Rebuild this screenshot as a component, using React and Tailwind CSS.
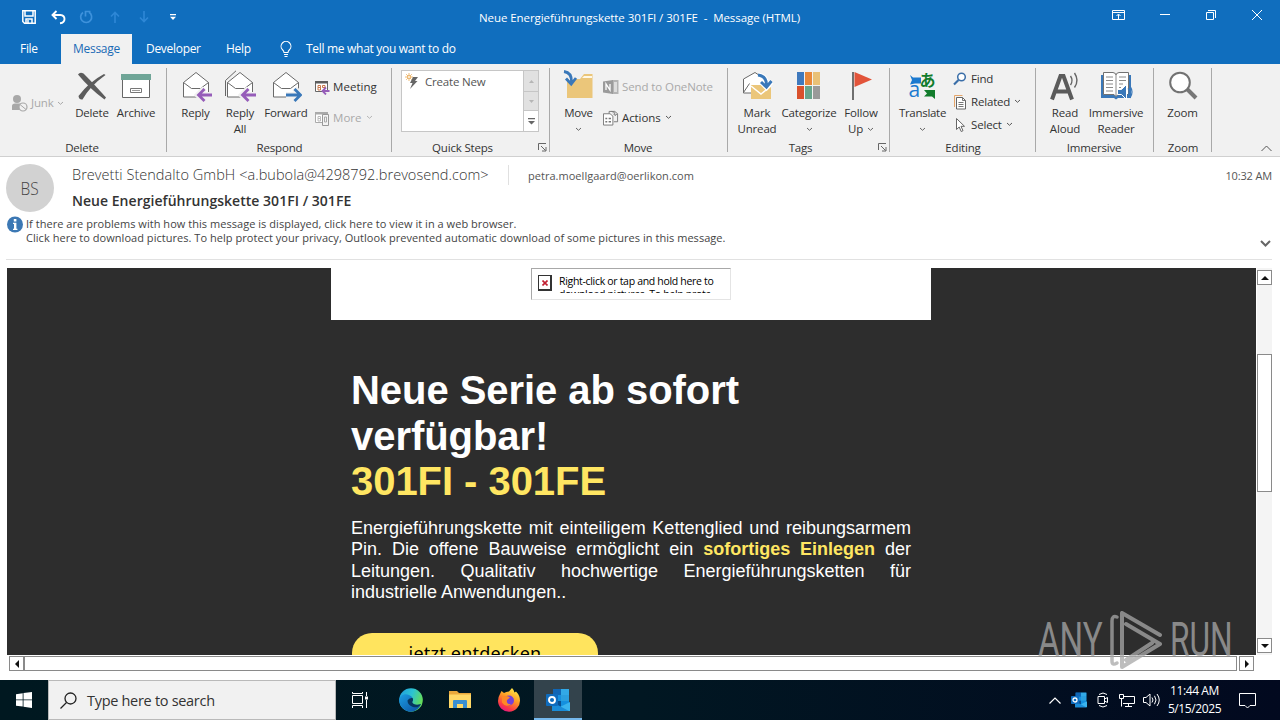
import React from 'react';

const Chevron = ({ className = '' }) => (
  <svg width="7" height="5" viewBox="0 0 7 5" className={className} fill="none" stroke="currentColor" strokeWidth="1">
    <path d="M1 1l2.500 2.300L6 1" />
  </svg>
);

/* ---------- ribbon icons ---------- */

const DeleteIcon = () => (
  <svg width="32" height="32" viewBox="0 0 32 32" fill="#5c5c5c">
    <path d="M2 4.500Q4 1.500 7.500 3.500Q18 14 30 27.500L28.500 29.500Q14 19 2 4.500Z" />
    <path d="M29.500 5L28 4Q13 12 2.500 26Q3 30 6.500 29.500Q14 16 29.500 5Z" />
  </svg>
);
const ArchiveIcon = () => (
  <svg width="32" height="32" viewBox="0 0 32 32">
    <path d="M2.500 8v19.500h27V8" fill="#fff" stroke="#666" />
    <path d="M1 4h30v6H1z" fill="#6fa597" />
    <path d="M10.500 18.500h11v4h-11z" fill="#fff" stroke="#777" />
    <path d="M12 20.500h8" stroke="#999" />
  </svg>
);
const Envelope = ({ arrow, all }) => (
  <svg width="32" height="32" viewBox="0 0 32 32" fill="none">
    {all && <path d="M1.500 26V10.500L12 .8" stroke="#666" />}
    <path d="M3.500 12.500L16 2.500l12.500 10v14.500h-25z" fill="#fff" stroke="#6a6a6a" />
    <path d="M3.500 12.500l8 6h9l8-6" stroke="#6a6a6a" />
    {arrow === 'left' ? (
      <path d="M32 25H19M24.500 18.500L18 25l6.500 6.500" stroke="#f1f1f1" strokeWidth="6" />
    ) : (
      <path d="M16 25h13M24.500 18.500L31 25l-6.500 6.500" stroke="#f1f1f1" strokeWidth="6" />
    )}
    {arrow === 'left' ? (
      <path d="M32 25H19M24.500 19L18.500 25l6 6" stroke="#965db9" strokeWidth="2.800" />
    ) : (
      <path d="M16 25h13M24.500 19l6 6-6 6" stroke="#3a78b9" strokeWidth="2.800" />
    )}
  </svg>
);
const MoveIcon = () => (
  <svg width="32" height="32" viewBox="0 0 32 32">
    <path d="M4 9h13l4-5h8.500v24H4z" fill="#ebc67a" />
    <path d="M21 6h8v2H19z" fill="#fff8e6" />
    <path d="M1 2q8 1 7.500 11" fill="none" stroke="#f1f1f1" strokeWidth="5" />
    <path d="M1 1.500q8 1 7.500 11M3 8.500l5.200 5.500L13 8" fill="none" stroke="#3a78b9" strokeWidth="2.800" />
  </svg>
);
const UnreadIcon = () => (
  <svg width="32" height="32" viewBox="0 0 32 32" fill="none">
    <path d="M2.500 9L14 2.500l9 6V23H2.500z" fill="#fff" stroke="#6a6a6a" />
    <path d="M2.500 22.500l6-9" stroke="#6a6a6a" />
    <path d="M10 15h20v14H10z" fill="#ebc67a" />
    <path d="M10 16l10 8 10-8" stroke="#fff" strokeWidth="1.500" />
    <path d="M17 5q9 1 8.500 11M20 12l5.500 5.500L31 11" stroke="#fff" strokeWidth="5" />
    <path d="M17 5q9 1 8.500 11M20 12l5.500 5L30.500 11" stroke="#3a78b9" strokeWidth="3" />
  </svg>
);
const CategorizeIcon = () => (
  <svg width="32" height="32" viewBox="0 0 32 32">
    <path d="M4 2h7v13H4z" fill="#3f79bd" />
    <path d="M12 2h7v13h-7z" fill="#e8883a" />
    <path d="M20 2h7v13h-7z" fill="#e9c177" />
    <path d="M4 16h7v13H4z" fill="#d9512c" />
    <path d="M12 16h7v13h-7z" fill="#68a58c" />
    <path d="M20 16h7v13h-7z" fill="#9a9a9a" />
  </svg>
);
const FlagIcon = () => (
  <svg width="32" height="32" viewBox="0 0 32 32">
    <path d="M7 2h2v28H7z" fill="#6f6f6f" />
    <path d="M9.500 2L27 9.500 9.500 17z" fill="#e2543a" />
  </svg>
);
const TranslateIcon = () => (
  <div className="relative h-8 w-8 overflow-visible">
    <svg width="32" height="32" viewBox="0 0 32 32" className="absolute left-0 top-0">
      <path d="M3 5l3 2.500h8v6H8L3 14.500l2-4.500z" fill="#1b79cf" />
      <path d="M17 20h11v9l-3-2.500h-8l3-3z" fill="#127c2c" />
    </svg>
    <span className="absolute left-[13px] top-[1px] font-['Noto_Sans_CJK_JP',sans-serif] text-[16px] font-bold leading-[16px] text-[#127c2c]">あ</span>
    <span className="absolute left-[2px] top-[9px] text-[21px] leading-[21px] text-[#1b79cf]">a</span>
  </div>
);
const ReadAloudIcon = () => (
  <svg width="32" height="32" viewBox="0 0 32 32" fill="none">
    <path d="M3 29.500L11.500 6h3L23 29.500M6.500 21.500h14" stroke="#5b5b5b" strokeWidth="4" />
    <path d="M21.500 6q3 4.500 0 9M25.500 3q5 7.500 0 14.500" stroke="#666" strokeWidth="1.400" />
  </svg>
);
const ReaderIcon = () => (
  <svg width="34" height="32" viewBox="0 0 34 32" fill="none">
    <path d="M2 5h30v23H19l-2 1.500L15 28H2z" fill="#3a78b9" />
    <path d="M4.500 2.500H14q3 .500 3 2.500 0-2 3-2.500h9.500v22H19l-2 2-2-2H4.500z" fill="#fff" stroke="#727272" />
    <path d="M17 5v21M7 7h7M7 10.500h7M7 14h7M7 17.500h7M7 21h7M20 7h7M20 10.500h7M20 14h4M20 17.500h2" stroke="#8a8a8a" />
    <path d="M18.500 19.500h4l5-5v15l-5-5h-4z" fill="#3a78b9" stroke="#fff" />
    <path d="M29 18.500q2.500 3.500 0 7M31 16q4 6 0 12" stroke="#3a78b9" strokeWidth="1.200" />
  </svg>
);
const ZoomIcon = () => (
  <svg width="32" height="32" viewBox="0 0 32 32" fill="none">
    <path d="M20 19l9 9" stroke="#777" strokeWidth="4" />
    <circle cx="13" cy="12.500" r="9.800" fill="#fff" stroke="#727272" strokeWidth="2" />
  </svg>
);
const JunkIcon = () => (
  <svg width="17" height="18" viewBox="0 0 17 18" fill="none">
    <circle cx="6" cy="5" r="4" fill="#a8a8a8" />
    <path d="M1 16v-4q0-2.500 3-2.500h6V16z" fill="#a8a8a8" />
    <circle cx="12" cy="13" r="4" fill="#f1f1f1" stroke="#a8a8a8" strokeWidth="1.200" />
    <path d="M9 10.500l6 5" stroke="#a8a8a8" />
  </svg>
);
const MeetingIcon = ({ muted }) => (
  <svg width="16" height="16" viewBox="0 0 16 16" fill="none">
    <path d="M1.500 2.500h12v10h-12z" fill="#fff" stroke={muted ? '#aaa' : '#666'} />
    <path d="M1 2h13v2.500H1z" fill={muted ? '#aaa' : '#5d5d5d'} />
    <path d="M4 6.500h2.500v2H4zM8.500 6.500H11v2H8.500zM4 8.500h2.500v2.500H4z" stroke={muted ? '#bbb' : '#c9774a'} />
    {muted ? (
      <g>
        <path d="M8.500 4.500h6v11h-6z" fill="#f4f4f4" stroke="#999" />
        <path d="M10.500 7h2v5h-2z" stroke="#aaa" />
      </g>
    ) : (
      <path d="M15.500 12H9M12 8.500L8.500 12l3.500 3.500" stroke="#965db9" strokeWidth="1.800" />
    )}
  </svg>
);
const OneNoteIcon = () => (
  <svg width="16" height="16" viewBox="0 0 16 16">
    <path d="M9 1h6.500v14H9z" fill="#b4b4b4" />
    <path d="M11 3h3v10h-3z" fill="#ddd" />
    <path d="M0 2.500L10 1v14L0 13.500z" fill="#9b9b9b" />
    <path d="M3 11V5l4 6V5" fill="none" stroke="#fff" strokeWidth="1.300" />
  </svg>
);
const ActionsIcon = () => (
  <svg width="17" height="16" viewBox="0 0 17 16" fill="none" stroke="#777">
    <path d="M6.500 3.500V1h6l3 2.500V12h-4" />
    <path d="M9 1q4 0 4 4M11 3.500l2 2 2-2" />
    <path d="M.5 3.500h7l3 2.500v9.500H.5z" fill="#fff" />
    <path d="M2.500 8.500h2M2.500 12h2M6 8.500h2.500M6 12h2.500" strokeWidth="1.400" />
  </svg>
);
const FindIcon = () => (
  <svg width="14" height="14" viewBox="0 0 14 14" fill="none" stroke="#3a6ea8">
    <circle cx="8.500" cy="5" r="3.800" strokeWidth="1.500" fill="#fff" />
    <path d="M5.500 8L1 12.500" strokeWidth="2.200" />
  </svg>
);
const RelatedIcon = () => (
  <svg width="14" height="16" viewBox="0 0 14 16" fill="none">
    <path d="M1.500 13V1.500h8" stroke="#e5a569" />
    <path d="M3.500 3.500h6l3 3v8.500h-9z" fill="#fff" stroke="#666" />
    <path d="M9.500 3.500v3h3M5.500 8.500h5M5.500 10.500h5M5.500 12.500h5" stroke="#666" strokeWidth=".9" />
  </svg>
);
const SelectIcon = () => (
  <svg width="14" height="16" viewBox="0 0 14 16" fill="#fff" stroke="#666">
    <path d="M3.500 1.500v11l2.700-2.500 2 4.500 1.800-.8-2-4.400h3.500z" />
  </svg>
);
const Launcher = () => (
  <svg width="9" height="9" viewBox="0 0 9 9" fill="none" stroke="#666" className="absolute bottom-0 right-[3px]">
    <path d="M.5 7V.5H8M3 3l4.500 4.500M8 4v4H4" />
  </svg>
);

/* ---------- ribbon parts ---------- */

const BigButton = ({ icon, label, sub, menu, className }) => (
  <div className={`flex flex-col items-center pt-[6px] ${className}`}>
    <div className="flex h-8 items-center">{icon}</div>
    <div className="mt-[3px] whitespace-nowrap leading-4">{label}</div>
    <div className="flex h-4 items-center gap-1 whitespace-nowrap leading-4">
      {sub}
      {menu && <Chevron className="text-[#666]" />}
    </div>
  </div>
);
const SmallButton = ({ icon, label, menu, muted, className = '' }) => (
  <div className={`flex items-center gap-[3px] whitespace-nowrap ${muted ? 'text-[#a9a9a9]' : ''} ${className}`}>
    <span className="flex w-4 justify-center">{icon}</span>
    <span>{label}</span>
    {menu && <Chevron className="ml-px opacity-80" />}
  </div>
);
const Group = ({ title, className, labelClass = '', launcher, children }) => (
  <div className={`relative flex h-[88px] flex-col ${className}`}>
    <div className="flex h-[76px] shrink-0">{children}</div>
    <div className={`shrink-0 text-center leading-4 ${labelClass}`}>{title}</div>
    {launcher && <Launcher />}
    <div className="absolute bottom-0 right-0 top-1 w-px bg-[#a9a9a9]" />
  </div>
);

const TitleBar = () => (
  <div className="flex h-[34px] items-center justify-between pl-[22px] text-white">
    <div className="flex w-[457px] items-center">
      <svg width="14" height="14" viewBox="0 0 14 14" fill="none" stroke="#fff" strokeWidth="1.500">
        <path d="M.8.800h12.400v12.400H2.500L.8 11.500zM3 1v5h8V1M4 13V9h6v4M6 10v3" />
      </svg>
      <svg width="15" height="15" viewBox="0 0 15 15" fill="none" stroke="#fff" strokeWidth="1.900" className="ml-[15px]">
        <path d="M5.500 1L1.500 5l4 4M2 5h7.500q4 .3 4 4t-4.500 4.300" />
      </svg>
      <svg width="14" height="14" viewBox="0 0 14 14" fill="none" stroke="#3e92dc" strokeWidth="1.700" className="ml-[13px]">
        <path d="M4 2.500A5.500 5.500 0 1 0 10 2.300M6.500 6.500V1.500h5" />
      </svg>
      <svg width="10" height="12" viewBox="0 0 10 12" fill="none" stroke="#2e87d6" strokeWidth="1.600" className="ml-[17px]">
        <path d="M5 12V1.500M1 5.500l4-4 4 4" />
      </svg>
      <svg width="10" height="12" viewBox="0 0 10 12" fill="none" stroke="#2e87d6" strokeWidth="1.600" className="ml-[19px]">
        <path d="M5 0v10.500M1 6.500l4 4 4-4" />
      </svg>
      <svg width="6" height="6" viewBox="0 0 6 6" fill="#fff" className="ml-[21px]">
        <path d="M0 0h6v1.200H0zM0 2.800h6L3 6z" />
      </svg>
    </div>
    <div className="grow whitespace-pre pt-[2px] text-[11.500px] tracking-[-0.07px]">Neue Energieführungskette 301FI / 301FE  -  Message (HTML)</div>
    <div className="flex items-center pb-[4px] pr-[18px]">
      <svg width="13" height="10" viewBox="0 0 13 10" fill="none" stroke="#fff">
        <path d="M.5.500h12v9H.5zM.5 2.500h12M6.500 9V4.500M4.500 6l2-2 2 2" />
      </svg>
      <svg width="10" height="10" viewBox="0 0 10 10" stroke="#fff" className="ml-[35px]"><path d="M0 4.500h10" /></svg>
      <svg width="10" height="10" viewBox="0 0 10 10" fill="none" stroke="#fff" className="ml-[36px]">
        <path d="M.5 2.500h7v7h-7zM2 .5h7.500V8" />
      </svg>
      <svg width="10" height="10" viewBox="0 0 10 10" stroke="#fff" className="ml-[36px]"><path d="M0 0l10 10M10 0L0 10" /></svg>
    </div>
  </div>
);

const Tabs = () => (
  <div className="flex h-[30px] items-center text-[12px] leading-[30px] tracking-[-0.3px] text-white">
    <span className="w-[61px] pl-[20px]">File</span>
    <span className="w-[71px] bg-[#f1f1f1] text-center text-[#1a6ab5]">Message</span>
    <span className="w-[80px] pl-[14px]">Developer</span>
    <span className="w-[68px] pl-[14px]">Help</span>
    <svg width="12" height="17" viewBox="0 0 12 17" fill="none" stroke="#fff" strokeWidth="1.100">
      <path d="M4 11.500q0-1.500-1.700-3A4.900 4.900 0 1 1 9.700 8.500Q8 10 8 11.500zM4 13.500h4M4.500 15.500h3" />
    </svg>
    <span className="pl-[14px]">Tell me what you want to do</span>
  </div>
);

const Ribbon = () => (
  <div className="flex h-[93px] border-b border-[#d0d0d0] bg-[#f1f1f1] pb-[4px] text-[11.500px] tracking-[-0.18px] text-[#333]">
    <Group title="Delete" className="w-[167px]" labelClass="pr-[3px]">
      <div className="flex w-[72px] items-center gap-[3px] pl-[11px] pt-[2px] text-[#a9a9a9]">
        <JunkIcon />
        <span>Junk</span>
        <Chevron />
      </div>
      <BigButton className="w-[40px]" icon={<DeleteIcon />} label="Delete" />
      <BigButton className="w-[48px]" icon={<ArchiveIcon />} label="Archive" />
    </Group>
    <Group title="Respond" className="w-[225px]">
      <BigButton className="ml-[6px] w-[45px]" icon={<Envelope arrow="left" />} label="Reply" />
      <BigButton className="w-[44px]" icon={<Envelope arrow="left" all />} label="Reply" sub="All" />
      <BigButton className="w-[48px]" icon={<Envelope arrow="right" />} label="Forward" />
      <div className="ml-[4px] flex flex-col pt-[7px] tracking-[0.05px]">
        <SmallButton className="h-[31px]" icon={<MeetingIcon />} label="Meeting" />
        <SmallButton className="h-[31px]" icon={<MeetingIcon muted />} label="More" menu muted />
      </div>
    </Group>
    <Group title="Quick Steps" className="w-[158px]" labelClass="pr-[17px]" launcher>
      <div className="ml-[9px] mt-[6px] flex h-[62px] w-[138px] border border-[#c6c6c6] bg-white">
        <div className="flex h-[21px] grow items-center gap-[6px] pl-[3px] text-[#555]">
          <svg width="14" height="17" viewBox="0 0 14 17" fill="none">
            <path d="M4 0v8M0 4h8M1.200 1.200l5.600 5.600M6.800 1.200L1.200 6.800" stroke="#ecb265" strokeWidth=".9" />
            <circle cx="4" cy="4" r="1.500" fill="#fff" stroke="#ecb265" />
            <path d="M8 4h5l-3 4h2.500L5 16l2.500-6H5z" fill="#666" />
          </svg>
          <span>Create New</span>
        </div>
        <div className="flex w-[15px] flex-col border-l border-[#c6c6c6]">
          <div className="flex h-[20px] items-center justify-center bg-[#e1e1e1]"><svg width="5" height="3"><path d="M0 3h5L2.500 0z" fill="#b5b5b5" /></svg></div>
          <div className="flex h-[20px] items-center justify-center border-y border-[#c6c6c6] bg-[#e1e1e1]"><svg width="5" height="3"><path d="M0 0h5L2.500 3z" fill="#b5b5b5" /></svg></div>
          <div className="flex grow items-center justify-center"><svg width="7" height="7"><path d="M0 0h7v1.200H0zM0 3h7L3.500 6.500z" fill="#666" /></svg></div>
        </div>
      </div>
    </Group>
    <Group title="Move" className="w-[178px]" labelClass="pr-[2px]">
      <BigButton className="ml-[4px] w-[49px]" icon={<MoveIcon />} label="Move" menu />
      <div className="flex flex-col pt-[7px] tracking-[-0.1px]">
        <SmallButton className="h-[31px]" icon={<OneNoteIcon />} label="Send to OneNote" muted />
        <SmallButton className="h-[31px]" icon={<ActionsIcon />} label="Actions" menu />
      </div>
    </Group>
    <Group title="Tags" className="w-[162px]" labelClass="pr-[17px]" launcher>
      <BigButton className="ml-[4px] w-[50px]" icon={<UnreadIcon />} label="Mark" sub="Unread" />
      <BigButton className="w-[54px]" icon={<CategorizeIcon />} label="Categorize" menu />
      <BigButton className="w-[50px]" icon={<FlagIcon />} label="Follow" sub="Up" menu />
    </Group>
    <Group title="Editing" className="w-[146px]">
      <BigButton className="ml-[6px] w-[53px] tracking-[-0.3px]" icon={<TranslateIcon />} label="Translate" menu />
      <div className="ml-[3px] flex flex-col pt-[3px]">
        <SmallButton className="h-[23px]" icon={<FindIcon />} label="Find" />
        <SmallButton className="h-[23px]" icon={<RelatedIcon />} label="Related" menu />
        <SmallButton className="h-[23px]" icon={<SelectIcon />} label="Select" menu />
      </div>
    </Group>
    <Group title="Immersive" className="w-[118px]" labelClass="pr-[2px]">
      <BigButton className="ml-[9px] w-[40px]" icon={<ReadAloudIcon />} label="Read" sub="Aloud" />
      <BigButton className="w-[62px]" icon={<ReaderIcon />} label="Immersive" sub="Reader" />
    </Group>
    <Group title="Zoom" className="w-[58px]">
      <BigButton className="w-[57px]" icon={<ZoomIcon />} label="Zoom" />
    </Group>
    <div className="flex grow items-end justify-end pr-[8px]">
      <svg width="11" height="7" viewBox="0 0 11 7" fill="none" stroke="#555"><path d="M.5 6l5-5 5 5" /></svg>
    </div>
  </div>
);

const MessageHeader = () => (
  <div className="flex h-[111px] flex-col pl-[6px] pr-[8px] pt-[7px]">
    <div className="flex h-[50px]">
      <div className="flex h-[48px] w-[48px] items-center justify-center rounded-full bg-[#d2d2d2] text-[18px] font-light text-[#444]">
        <span className="origin-center scale-x-[0.86]">BS</span>
      </div>
      <div className="ml-[18px] flex grow flex-col">
        <div className="flex h-[22px] items-center whitespace-nowrap">
          <span className="w-[436px] text-[14.500px] font-light tracking-[0.04px] text-[#333]">Brevetti Stendalto GmbH &lt;a.bubola@4298792.brevosend.com&gt;</span>
          <span className="h-[20px] w-px bg-[#e0e0e0]" />
          <span className="ml-[19px] grow pt-[2px] text-[11px] tracking-[0.03px] text-[#555]">petra.moellgaard@oerlikon.com</span>
          <span className="pt-[2px] text-[11px] tracking-[-0.15px] text-[#555]">10:32 AM</span>
        </div>
        <div className="mt-[5px] text-[14px] font-semibold leading-[20px] tracking-[0.03px] text-[#333]">Neue Energieführungskette 301FI / 301FE</div>
      </div>
    </div>
    <div className="flex h-[45px] items-start pt-[2px]">
      <svg width="18" height="18" viewBox="0 0 18 18">
        <circle cx="9" cy="8.500" r="8" fill="#3c78b4" />
        <path d="M7.800 3h2.600v2.400H7.800zM7 6.800h3.400v6h1V14H7v-1.200h1V8H7z" fill="#fff" />
      </svg>
      <div className="ml-[2px] grow pt-[1px] text-[11px] leading-[14px] tracking-[0.04px] text-[#444]">
        <div>If there are problems with how this message is displayed, click here to view it in a web browser.</div>
        <div>Click here to download pictures. To help protect your privacy, Outlook prevented automatic download of some pictures in this message.</div>
      </div>
      <svg width="11" height="8" viewBox="0 0 11 8" fill="none" stroke="#666" strokeWidth="2" className="mr-px mt-[24px]"><path d="M1 1l4.500 4.500L10 1" /></svg>
    </div>
    <div className="border-b border-[#e1e1e1]" />
  </div>
);

const Body = () => (
  <div className="h-[387px] w-[1249px] overflow-hidden bg-[#2d2d2d]">
    <div className="ml-[324px] flex w-[600px] flex-col">
      <div className="flex h-[52px] justify-center bg-white">
        <div className="flex h-[32px] w-[200px] border border-b-[#e4e4e4] border-l-[#a8a8a8] border-r-[#e4e4e4] border-t-[#a8a8a8] pl-[6px] pt-[6px]">
          <div className="flex h-[16px] w-[14px] items-center justify-center border border-b-2 border-r-2 border-[#333]">
            <svg width="6" height="6" stroke="#c22032" strokeWidth="1.600"><path d="M.5.500l5 5M5.500.500l-5 5" /></svg>
          </div>
          <div className="ml-[7px] h-[18px] w-[170px] overflow-hidden whitespace-nowrap text-[10.500px] leading-[13px] tracking-[-0.31px] text-black">
            Right-click or tap and hold here to
            <br />
            download pictures. To help prote
          </div>
        </div>
      </div>
      <div className="px-[20px] pt-[48px] font-['Liberation_Sans',Arial,sans-serif] text-white">
        <h1 className="text-[40px] font-bold leading-[45.500px] tracking-[-0.05px]">
          Neue Serie ab sofort
          <br />
          verfügbar!
          <br />
          <span className="text-[#ffe662]">301FI - 301FE</span>
        </h1>
        <p className="mt-[13px] text-justify text-[18px] leading-[21.500px]">
          Energieführungskette mit einteiligem Kettenglied und reibungsarmem Pin. Die offene Bauweise ermöglicht ein{' '}
          <b className="text-[#ffe662]">sofortiges Einlegen</b> der Leitungen. Qualitativ hochwertige Energieführungsketten für industrielle Anwendungen..
        </p>
      </div>
      <div className="ml-[21px] mt-[29px] flex h-[41px] w-[246px] items-center justify-center rounded-[20px] bg-[#ffe45e] font-['Noto_Sans',sans-serif] text-[18px] tracking-[0.22px] text-black">
        jetzt entdecken
      </div>
    </div>
  </div>
);

const ArrowBox = ({ d, className = '' }) => (
  <div className={`flex h-[15px] w-[15px] items-center justify-center border border-[#8a8a8a] bg-white ${className}`}>
    <svg width="8" height="8" viewBox="0 0 8 8"><path d={d} fill="#111" /></svg>
  </div>
);

const Watermark = () => (
  <div className="absolute left-[1038px] top-[608px] flex h-[64px] w-[196px] items-center justify-between font-['Roboto',sans-serif] text-[48px] leading-[64px] text-[#a8a8a8] opacity-75">
    <span className="flex w-[66px]"><span className="origin-left scale-x-[0.690]">ANY</span></span>
    <svg width="58" height="64" viewBox="0 0 58 64" fill="none" stroke="currentColor" strokeWidth="4" strokeLinejoin="round" strokeLinecap="round" className="shrink-0">
      <path d="M9 9Q4 7 4 13V53Q4 58 9 55" strokeWidth="3.500" />
      <path d="M52 27L14 5V59L52 36L18 16M18 52L44 35" />
    </svg>
    <span className="flex w-[64px]"><span className="origin-left scale-x-[0.660]">RUN</span></span>
  </div>
);

const OutlookLogo = ({ size }) => (
  <svg width={size} height={size} viewBox="0 0 24 24">
    <path d="M7 1h16v18H7z" fill="#1490df" />
    <path d="M7 1h8v6H7z" fill="#1066b5" />
    <path d="M15 1h8v6h-8z" fill="#32a9e7" />
    <path d="M15 7h8v6h-8z" fill="#2b9fdf" />
    <path d="M7 13h8v6H7z" fill="#0a4f91" />
    <path d="M6 23l18-9v9z" fill="#3bb4ee" />
    <path d="M6 14l17 9H6z" fill="#1a8cd8" />
    <rect y="6" width="12" height="12" rx="1" fill="#0f6cbd" />
    <circle cx="6" cy="12" r="3" fill="none" stroke="#fff" strokeWidth="1.900" />
  </svg>
);

const Taskbar = () => (
  <div className="flex h-[40px] items-center bg-[linear-gradient(90deg,#001820,#011722_50%,#02091f)] text-white">
    <div className="flex w-[48px] justify-center">
      <svg width="16" height="16" viewBox="0 0 16 16" fill="#fff"><path d="M0 2.200l6.700-1v6.300H0zM7.500 1L16 0v7.500H7.500zM0 8.300h6.700v6.300L0 13.700zM7.500 8.300H16V16l-8.500-1.200z" /></svg>
    </div>
    <div className="flex h-full w-[288px] items-center border border-[#b9b9b9] bg-[#f1f1f1] pl-[11px] text-[14.500px] tracking-[-0.3px] text-[#333]">
      <svg width="17" height="17" viewBox="0 0 17 17" fill="none" stroke="#222" strokeWidth="1.300"><circle cx="10.500" cy="6.500" r="5.500" /><path d="M6.500 10.500L.5 16.500" /></svg>
      <span className="ml-[10px] pt-[2px]">Type here to search</span>
    </div>
    <div className="flex w-[49px] justify-center">
      <svg width="17" height="16" viewBox="0 0 17 16" fill="none" stroke="#fff"><path d="M.5 3.500h10v8H.5zM.5 0v1.500h10V0M.5 16v-2.500h10V16M14.500 0v4M14.500 8v8" /><path d="M13 4.500h3v3h-3z" fill="#fff" stroke="none" /></svg>
    </div>
    <div className="flex w-[52px] justify-center">
      <svg width="24" height="24" viewBox="0 0 24 24">
        <defs>
          <linearGradient id="edgeTop" x1="0" y1="0" x2="1" y2=".4"><stop offset="0" stopColor="#1f9be0" /><stop offset=".55" stopColor="#2cc3d2" /><stop offset="1" stopColor="#63dd5c" /></linearGradient>
          <linearGradient id="edgeLow" x1="0" y1="0" x2="1" y2="1"><stop offset="0" stopColor="#1b9de2" /><stop offset="1" stopColor="#0c4fa0" /></linearGradient>
        </defs>
        <circle cx="12" cy="12" r="11.800" fill="url(#edgeTop)" />
        <path d="M.2 12C1 7 6 5 10 7q4 1.500 4 5c0 1-.8 1.500-1 2.400 0 2 4 3.600 9 1.600A12 12 0 0 1 12 23.800 12 12 0 0 1 .2 12z" fill="url(#edgeLow)" />
        <path d="M8.500 12.500q1.500-3 5-2.500c1 1.200.5 3-.3 4 .3 2.500 5 3.500 8.800 1.900-2 4-7 4-10 2.100q-3.500-2-3.500-5.500z" fill="#07365f" />
      </svg>
    </div>
    <div className="flex w-[46px] justify-center">
      <svg width="22" height="20" viewBox="0 0 22 20"><path d="M0 1h8l2 2h12v15H0z" fill="#e9a83c" /><path d="M0 4.500h22V18H0z" fill="#ffd867" /><path d="M4 18v-7q0-1 1-1h12q1 0 1 1v7h-4v-4H8v4z" fill="#3b8fd0" /></svg>
    </div>
    <div className="flex w-[51px] justify-center">
      <svg width="24" height="24" viewBox="0 0 24 24">
        <defs><linearGradient id="fox" x1=".8" y1="0" x2=".3" y2="1"><stop offset="0" stopColor="#fff14a" /><stop offset=".45" stopColor="#ff9a24" /><stop offset=".8" stopColor="#fb3b45" /><stop offset="1" stopColor="#e31587" /></linearGradient></defs>
        <path d="M3 6l1.500-3L7 5q2-1.500 5-1.500L15 0q2 2 2.500 4.500L19 3.500q4 4 4 9A11 11 0 0 1 1 13q0-4 2-7z" fill="url(#fox)" />
        <circle cx="12" cy="12.500" r="5" fill="#7541d8" />
        <path d="M5 9q4-2 8 .5l-3 2.500q-1 4 4 4.500-6 3-9-2z" fill="#ff8926" />
      </svg>
    </div>
    <div className="flex h-full w-[48px] items-center justify-center border-b-2 border-[#76b9ed] bg-[#33434c] pt-[2px]"><OutlookLogo size={24} /></div>
    <div className="flex grow items-center justify-end">
      <svg width="12" height="7" viewBox="0 0 12 7" fill="none" stroke="#fff" strokeWidth="1.200"><path d="M.5 6.500L6 1l5.500 5.500" /></svg>
      <span className="ml-[10px]"><OutlookLogo size={16} /></span>
      <svg width="12" height="16" viewBox="0 0 12 16" fill="none" stroke="#fff" className="ml-[10px]"><path d="M1 4.500h6.500v7H1zM7.500 7l3-1.500v5L7.500 9M2 2.500Q6-.5 10 2.500M2 13.500q4 3 8 0" /></svg>
      <svg width="16" height="15" viewBox="0 0 16 15" fill="none" stroke="#fff" className="ml-[10px]"><path d="M5 3.500h10.500v7H4M.5 1.500h4v4h-4zM2.500 5.500v8M9.500 10.500v3M6 13.500h7" /></svg>
      <svg width="17" height="14" viewBox="0 0 17 14" fill="none" stroke="#fff" className="ml-[8px]"><path d="M.5 4.500H3l4-3.500v12L3 9.500H.5zM9 4.500q2 2.500 0 5M11.500 2.800q3 4.200 0 8.400M14 1q4.500 6 0 12" /></svg>
    </div>
    <div className="flex w-[69px] flex-col items-center text-[12px] leading-[18px] tracking-[-0.4px]">
      <span>11:44 AM</span>
      <span>5/15/2025</span>
    </div>
    <div className="flex w-[51px] justify-start pl-[10px]">
      <svg width="17" height="17" viewBox="0 0 17 17" fill="none" stroke="#fff"><path d="M.5 1.500h16v12H11L8.500 16 6 13.500H.5z" /></svg>
    </div>
  </div>
);

export default function App() {
  return (
    <div className="relative flex h-[720px] w-[1280px] flex-col overflow-hidden bg-white font-['Open_Sans','Noto_Sans',sans-serif]">
      <div className="bg-[#106ebe]">
        <TitleBar />
        <Tabs />
      </div>
      <Ribbon />
      <MessageHeader />
      <div className="flex h-[387px] pl-[7px]">
        <Body />
        <div className="ml-px flex w-[15px] flex-col bg-[#f4f4f4] pt-[2px]">
          <ArrowBox d="M0 6h8L4 2z" />
          <div className="mt-[69px] h-[138px] border border-[#8a8a8a] bg-white" />
          <div className="grow" />
          <ArrowBox className="mb-[2px]" d="M0 2h8L4 6z" />
        </div>
      </div>
      <div className="flex h-[25px] items-start pl-[9px] pt-[1px]">
        <ArrowBox d="M6 0v8L2 4z" />
        <div className="h-[15px] w-[1213px] border border-[#8a8a8a] bg-white" />
        <ArrowBox className="ml-[2px]" d="M2 0v8l4-4z" />
      </div>
      <Taskbar />
      <Watermark />
    </div>
  );
}
